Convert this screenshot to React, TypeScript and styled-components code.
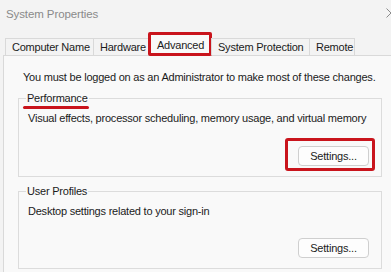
import React from "react";
import styled, { createGlobalStyle } from "styled-components";

const Global = createGlobalStyle`
  html, body { margin: 0; padding: 0; background: #f3f3f3; }
  body { font-family: "Liberation Sans", Arial, sans-serif; }
`;

const RED = "#c9141c";

const Window = styled.div`
  width: 391px;
  height: 272px;
  overflow: hidden;
  background: #f3f3f3;
  display: flex;
  flex-direction: column;
  font-family: "Liberation Sans", Arial, sans-serif;
  font-size: 11px;
  letter-spacing: -0.22px;
  color: #1b1b1b;
`;

const TitleBar = styled.div`
  height: 26px;
  flex: none;
  display: flex;
  align-items: center;
  padding-left: 6px;
`;

const Title = styled.span`
  color: #8a8a8a;
  font-size: 11.5px;
  letter-spacing: -0.1px;
  padding-top: 1px;
`;

const Close = styled.svg`
  margin-left: auto;
  margin-right: -5px;
  flex: none;
`;

const TabStrip = styled.div`
  height: 29px;
  flex: none;
  display: flex;
  align-items: flex-end;
  padding-left: 5px;
  position: relative;
  z-index: 1;
`;

const Tab = styled.div<{ $w: number; $active?: boolean; $last?: boolean }>`
  position: relative;
  box-sizing: border-box;
  width: ${(p) => p.$w}px;
  height: ${(p) => (p.$active ? 23 : 17)}px;
  margin-bottom: ${(p) => (p.$active ? -1 : 0)}px;
  border-top: 1px solid #d9d9d9;
  border-left: 1px solid #d9d9d9;
  border-right: ${(p) => (p.$last || p.$active ? "1px solid #d9d9d9" : "none")};
  background: ${(p) => (p.$active ? "#f9f9f9" : "#f3f3f3")};
  display: flex;
  align-items: center;
  padding-left: ${(p) => (p.$active ? 7 : 6)}px;
  padding-bottom: ${(p) => (p.$active ? 1 : 0)}px;
  white-space: nowrap;
`;

const TabMark = styled.span`
  position: absolute;
  top: -2px;
  left: -2px;
  right: -2px;
  bottom: 0;
  border: 3px solid ${RED};
  border-radius: 2px;
  pointer-events: none;
`;

const Panel = styled.div`
  flex: 1;
  margin-left: 3px;
  border-top: 1px solid #d9d9d9;
  border-left: 1px solid #d9d9d9;
  background: #f9f9f9;
  padding: 13px 9px 0 14px;
`;

const Intro = styled.div`
  margin-left: 5px;
  line-height: 16px;
  height: 16px;
  white-space: nowrap;
`;

const GroupBox = styled.fieldset<{ $gap: number }>`
  margin: ${(p) => p.$gap}px 0 0;
  padding: 4px 12px 10px 9px;
  border: 1px solid #dcdcdc;
  min-width: 0;
`;

const Legend = styled.legend`
  position: relative;
  padding: 0 1px;
  margin-left: -2px;
  line-height: 16px;
`;

const Underline = styled.span`
  position: absolute;
  left: -3px;
  right: 0;
  top: 100%;
  height: 3px;
  border-radius: 2px;
  background: ${RED};
`;

const Description = styled.div`
  line-height: 16px;
  white-space: nowrap;
`;

const ButtonRow = styled.div<{ $gap: number }>`
  display: flex;
  justify-content: flex-end;
  margin-top: ${(p) => p.$gap}px;
`;

const Button = styled.button`
  position: relative;
  box-sizing: border-box;
  width: 71px;
  height: 20px;
  padding: 0;
  border: 1px solid #cfcfcf;
  border-radius: 4px;
  background: #fdfdfd;
  font: inherit;
  letter-spacing: inherit;
  color: #1b1b1b;
`;

const ButtonMark = styled.span`
  position: absolute;
  top: -9px;
  left: -14px;
  right: -7px;
  bottom: -6px;
  border: 3px solid ${RED};
  border-radius: 3px;
  pointer-events: none;
`;

const tabs = [
  { label: "Computer Name", w: 88 },
  { label: "Hardware", w: 56 },
  { label: "Advanced", w: 62, active: true },
  { label: "System Protection", w: 98 },
  { label: "Remote", w: 46 },
];

export default function App() {
  return (
    <>
      <Global />
      <Window>
        <TitleBar>
          <Title>System Properties</Title>
          <Close width="10" height="10" viewBox="0 0 10 10">
            <path d="M0.5 0.5 L9.5 9.5 M9.5 0.5 L0.5 9.5" stroke="#8a8a8a" strokeWidth="1" fill="none" />
          </Close>
        </TitleBar>
        <TabStrip>
          {tabs.map((t, i) => (
            <Tab key={t.label} $w={t.w} $active={t.active} $last={i === tabs.length - 1}>
              {t.label}
              {t.active && <TabMark />}
            </Tab>
          ))}
        </TabStrip>
        <Panel>
          <Intro>You must be logged on as an Administrator to make most of these changes.</Intro>
          <GroupBox $gap={5}>
            <Legend>
              Performance
              <Underline />
            </Legend>
            <Description>Visual effects, processor scheduling, memory usage, and virtual memory</Description>
            <ButtonRow $gap={20}>
              <Button>
                Settings...
                <ButtonMark />
              </Button>
            </ButtonRow>
          </GroupBox>
          <GroupBox $gap={6}>
            <Legend>User Profiles</Legend>
            <Description>Desktop settings related to your sign-in</Description>
            <ButtonRow $gap={19}>
              <Button>Settings...</Button>
            </ButtonRow>
          </GroupBox>
        </Panel>
      </Window>
    </>
  );
}
